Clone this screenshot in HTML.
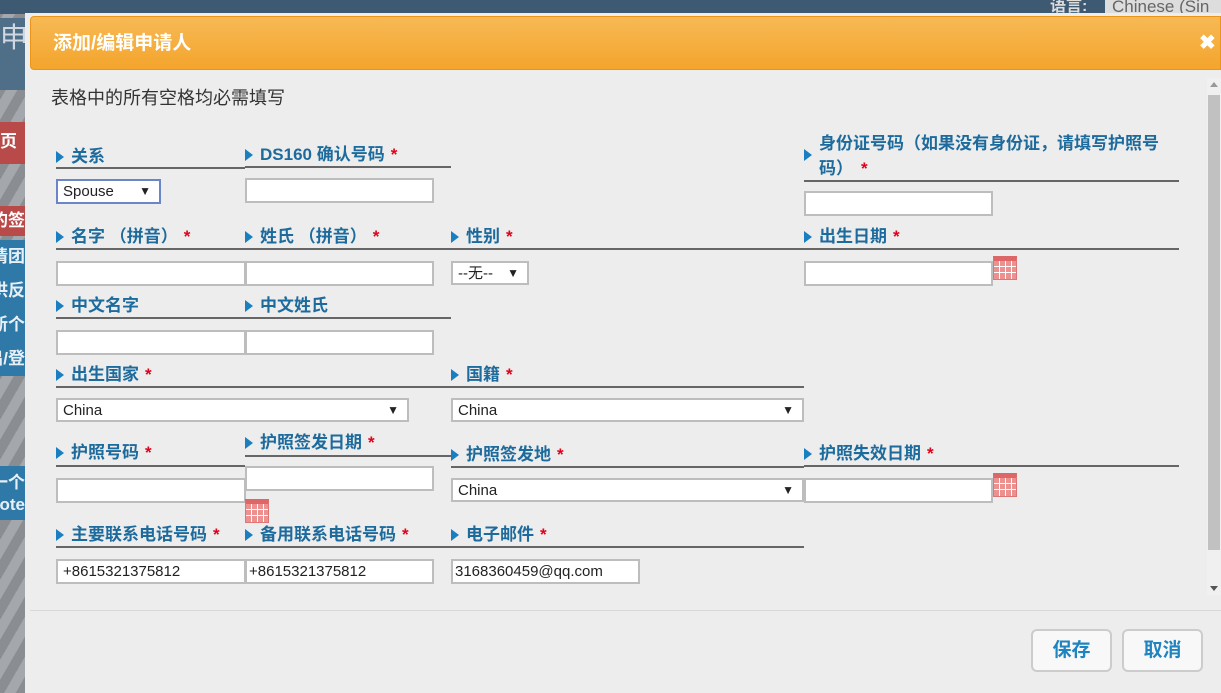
<!DOCTYPE html>
<html><head><meta charset="utf-8"><style>
*{box-sizing:border-box;margin:0;padding:0}
body{width:1221px;height:693px;overflow:hidden;position:relative;background:#6a7d8c;font-family:"Liberation Sans","Noto Sans CJK SC",sans-serif}
.a{position:absolute}
.s{overflow:hidden;white-space:nowrap}
.bg{left:0;top:0;width:1221px;height:693px;background:repeating-linear-gradient(120deg,#8a8e92 0 10px,#a4a8ac 10px 20px)}
.top{left:0;top:0;width:1221px;height:14px;background:#3d5a72}
.dlg{left:25px;top:13px;width:1196px;height:680px;background:#ededed}
.hdr{left:30px;top:16px;width:1191px;height:54px;background:linear-gradient(#f7b955,#f4a52c);border:1px solid #e8951a;border-radius:4px 0 0 4px;color:#fff;font-weight:bold;font-size:19px;line-height:54px;padding-left:22px}
.lb{position:absolute;color:#1d6a9c;font-weight:bold;font-size:17px;line-height:18px;padding-left:15px;white-space:nowrap}
.lb:before{content:"";position:absolute;left:0;top:3px;border-left:8px solid #1a7fc1;border-top:6px solid transparent;border-bottom:6px solid transparent}
.lb i{color:#e0001b;font-style:normal;margin-left:6px}
.ln{position:absolute;height:2px;background:#666}
.in{position:absolute;height:25px;background:#fff;border:2px solid #bdbdbd;font-size:15px;line-height:21px;padding-left:5px;color:#222}
.sel:after{content:"▼";position:absolute;right:8px;top:0;font-size:12px;color:#222}
.cal{position:absolute;width:24px;height:24px;border:1px solid #d77;border-top:5px solid #d66;background:
linear-gradient(90deg,transparent 5px,#fff 5px 6px,transparent 6px 11px,#fff 11px 12px,transparent 12px 17px,#fff 17px 18px,transparent 18px),
linear-gradient(transparent 5px,#fff 5px 6px,transparent 6px 11px,#fff 11px 12px,transparent 12px),#ec9090}
.btn{position:absolute;top:629px;width:81px;height:43px;border:2px solid #ccc;border-radius:6px;background:#f8f8f8;color:#1f84c0;font-weight:bold;font-size:19px;line-height:39px;text-align:center}
</style></head><body>
<div class="a bg"></div>
<div class="a top"></div>
<div class="a" style="left:1050px;top:0;font-size:16px;color:#ddd;font-weight:bold;line-height:14px">语言:</div>
<div class="a s" style="left:1105px;top:0;width:116px;height:14px;background:#ddd;color:#666;font-size:17px;line-height:14px;padding-left:7px">Chinese (Sin</div>
<div class="a s" style="left:0;top:18px;width:25px;height:72px;background:#4f6e88;color:#cfd8e0;font-size:28px;line-height:40px">申讠</div>
<div class="a s" style="left:0;top:122px;width:25px;height:42px;background:#b94a4a;color:#fff;font-weight:bold;font-size:17px;line-height:40px">页</div>
<div class="a s" style="left:0;top:206px;width:25px;height:30px;background:#b94a4a;color:#fff;font-weight:bold;font-size:17px;line-height:30px;direction:rtl">的签</div>
<div class="a s" style="left:0;top:240px;width:25px;height:136px;background:#2f79a8;color:#e8f0f6;font-weight:bold;font-size:17px;line-height:34px;direction:rtl">请团<br>供反<br>新个<br>出/登</div>
<div class="a s" style="left:0;top:466px;width:25px;height:54px;background:#2f79a8;color:#e8f0f6;font-weight:bold;font-size:17px;line-height:22px;padding-top:6px;direction:rtl">一个<br>ote</div>
<div class="a dlg"></div>
<div class="a hdr">添加/编辑申请人</div>
<div class="a" style="left:1199px;top:30px;color:#fff;font-weight:bold;font-size:20px">✖</div>
<div class="a" style="left:51px;top:84px;font-size:18px;color:#333">表格中的所有空格均必需填写</div>
<div class="a" style="left:1207px;top:78px;width:14px;height:517px;background:#f0f0f0"></div>
<div class="a" style="left:1208px;top:95px;width:12px;height:455px;background:#c1c1c1"></div>
<div class="a" style="left:1210px;top:82px;border-bottom:5px solid #999;border-left:4px solid transparent;border-right:4px solid transparent"></div>
<div class="a" style="left:1210px;top:586px;border-top:5px solid #555;border-left:4px solid transparent;border-right:4px solid transparent"></div>

<!-- row1 -->
<div class="lb" style="left:56px;top:148px">关系</div>
<div class="ln" style="left:56px;top:167px;width:189px"></div>
<div class="lb" style="left:245px;top:146px">DS160 确认号码<i>*</i></div>
<div class="ln" style="left:245px;top:166px;width:206px"></div>
<div class="in sel" style="left:56px;top:179px;width:105px;border-color:#6a85c8;background:#fff">Spouse</div>
<div class="in" style="left:245px;top:178px;width:189px"></div>
<div class="a" style="left:804px;top:149px;border-left:8px solid #1a7fc1;border-top:6px solid transparent;border-bottom:6px solid transparent"></div>
<div class="a" style="left:819px;top:131px;width:345px;color:#1d6a9c;font-weight:bold;font-size:17px;line-height:25px">身份证号码（如果没有身份证，请填写护照号码）<span style="color:#e0001b;margin-left:8px">*</span></div>
<div class="ln" style="left:804px;top:180px;width:375px"></div>
<div class="in" style="left:804px;top:191px;width:189px"></div>

<!-- row2 -->
<div class="lb" style="left:56px;top:228px">名字 （拼音）<i>*</i></div>
<div class="lb" style="left:245px;top:228px">姓氏 （拼音）<i>*</i></div>
<div class="lb" style="left:451px;top:228px">性别<i>*</i></div>
<div class="lb" style="left:804px;top:228px">出生日期<i>*</i></div>
<div class="ln" style="left:56px;top:248px;width:1123px"></div>
<div class="in" style="left:56px;top:261px;width:190px"></div>
<div class="in" style="left:245px;top:261px;width:189px"></div>
<div class="in sel" style="left:451px;top:261px;width:78px;height:24px">--无--</div>
<div class="in" style="left:804px;top:261px;width:189px"></div>
<div class="cal" style="left:993px;top:256px"></div>

<!-- row3 -->
<div class="lb" style="left:56px;top:297px">中文名字</div>
<div class="lb" style="left:245px;top:297px">中文姓氏</div>
<div class="ln" style="left:56px;top:317px;width:395px"></div>
<div class="in" style="left:56px;top:330px;width:190px"></div>
<div class="in" style="left:245px;top:330px;width:189px"></div>

<!-- row4 -->
<div class="lb" style="left:56px;top:366px">出生国家<i>*</i></div>
<div class="lb" style="left:451px;top:366px">国籍<i>*</i></div>
<div class="ln" style="left:56px;top:386px;width:748px"></div>
<div class="in sel" style="left:56px;top:398px;width:353px;height:24px">China</div>
<div class="in sel" style="left:451px;top:398px;width:353px;height:24px">China</div>

<!-- row5 -->
<div class="lb" style="left:56px;top:444px">护照号码<i>*</i></div>
<div class="ln" style="left:56px;top:465px;width:189px"></div>
<div class="lb" style="left:245px;top:434px">护照签发日期<i>*</i></div>
<div class="ln" style="left:245px;top:455px;width:206px"></div>
<div class="lb" style="left:451px;top:446px">护照签发地<i>*</i></div>
<div class="ln" style="left:451px;top:466px;width:353px"></div>
<div class="lb" style="left:804px;top:445px">护照失效日期<i>*</i></div>
<div class="ln" style="left:804px;top:465px;width:375px"></div>
<div class="in" style="left:56px;top:478px;width:190px"></div>
<div class="in" style="left:245px;top:466px;width:189px"></div>
<div class="cal" style="left:245px;top:499px"></div>
<div class="in sel" style="left:451px;top:478px;width:353px;height:24px">China</div>
<div class="in" style="left:804px;top:478px;width:189px"></div>
<div class="cal" style="left:993px;top:473px"></div>

<!-- row6 -->
<div class="lb" style="left:56px;top:526px">主要联系电话号码<i>*</i></div>
<div class="lb" style="left:245px;top:526px">备用联系电话号码<i>*</i></div>
<div class="lb" style="left:451px;top:526px">电子邮件<i>*</i></div>
<div class="ln" style="left:56px;top:546px;width:748px"></div>
<div class="in" style="left:56px;top:559px;width:190px">+8615321375812</div>
<div class="in" style="left:245px;top:559px;width:189px;padding-left:2px">+8615321375812</div>
<div class="in" style="left:451px;top:559px;width:189px;padding-left:2px">3168360459@qq.com</div>

<div class="a" style="left:30px;top:610px;width:1191px;height:1px;background:#d8d8d8"></div>
<div class="btn" style="left:1031px">保存</div>
<div class="btn" style="left:1122px">取消</div>
</body></html>
